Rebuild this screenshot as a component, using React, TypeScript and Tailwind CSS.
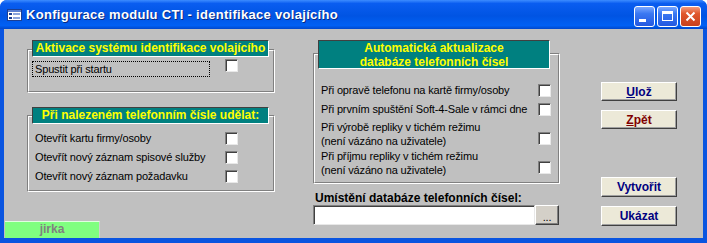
import React from "react"

const font = "font-['Liberation_Sans',Arial,sans-serif]"

function Check({ className = "" }: { className?: string }) {
  return (
    <span
      className={`block w-[13px] h-[13px] shrink-0 bg-white border border-t-[#808080] border-l-[#808080] border-r-[#e8e8e8] border-b-[#e8e8e8] shadow-[inset_1px_1px_0_#404040] ${className}`}
    />
  )
}

function Header({ children, className = "" }: { children: React.ReactNode; className?: string }) {
  return (
    <div
      className={`bg-[#008080] text-[#ffff00] font-bold text-[12px] text-center border border-t-[#404040] border-l-[#404040] border-r-white border-b-white ${className}`}
    >
      {children}
    </div>
  )
}

// etched group box (outer dark/white, inner white/dark)
function Frame({ children, className = "" }: { children: React.ReactNode; className?: string }) {
  return (
    <div className={`border border-t-[#808080] border-l-[#808080] border-r-white border-b-white ${className}`}>
      <div className="h-full border border-t-white border-l-white border-r-[#808080] border-b-[#808080]">
        {children}
      </div>
    </div>
  )
}

function Btn({ children, color = "text-[#000080]", className = "" }: { children: React.ReactNode; color?: string; className?: string }) {
  return (
    <button
      className={`w-[76px] h-[19px] bg-[#ece9d8] border border-t-white border-l-white border-r-[#404040] border-b-[#404040] shadow-[inset_-1px_-1px_0_#a0a0a0] font-bold text-[12px] leading-none ${color} ${className}`}
    >
      {children}
    </button>
  )
}

function TitleIcon() {
  return (
    <svg width="15" height="12" viewBox="0 0 15 12" className="shrink-0">
      <rect x="0.5" y="0.5" width="14" height="11" fill="#ffffff" stroke="#1b3f94" />
      <rect x="1" y="1" width="13" height="2" fill="#5a7fd0" />
      <rect x="2" y="4" width="3" height="2" fill="#1b3f94" />
      <rect x="6" y="4" width="7" height="2" fill="#8aa4dc" />
      <rect x="2" y="8" width="3" height="2" fill="#1b3f94" />
      <rect x="6" y="8" width="7" height="2" fill="#8aa4dc" />
    </svg>
  )
}

function WinBtn({ kind }: { kind: "min" | "max" | "close" }) {
  const bg =
    kind === "close"
      ? "bg-[linear-gradient(180deg,#f29a7c_0%,#e0572c_35%,#c8401c_100%)]"
      : "bg-[linear-gradient(180deg,#7aa8ff_0%,#3a78f2_35%,#2458e0_100%)]"
  return (
    <div className={`w-[21px] h-[21px] rounded-[3px] border border-white flex items-center justify-center ${bg}`}>
      {kind === "min" && <span className="block w-[7px] h-[3px] bg-white mt-[8px] -ml-[4px]" />}
      {kind === "max" && <span className="block w-[11px] h-[10px] border border-white border-t-[3px]" />}
      {kind === "close" && (
        <svg width="11" height="11" viewBox="0 0 11 11">
          <path d="M1.5 1.5 L9.5 9.5 M9.5 1.5 L1.5 9.5" stroke="#ffffff" strokeWidth="2" />
        </svg>
      )}
    </div>
  )
}

export default function App() {
  const leftRows = ["Otevřít kartu firmy/osoby", "Otevřít nový záznam spisové služby", "Otevřít nový záznam požadavku"]

  return (
    <div className={`w-[707px] h-[243px] flex flex-col bg-[#0a55e0] rounded-t-[7px] overflow-hidden text-black ${font}`}>
      {/* Title bar */}
      <div className="h-[29px] shrink-0 flex items-center pl-[7px] bg-[linear-gradient(180deg,#3d8cff_0%,#0a5df0_12%,#0054e3_55%,#0060f4_88%,#0047cc_100%)]">
        <TitleIcon />
        <span className="ml-[4px] text-white font-bold text-[13px] tracking-[0.3px] [text-shadow:1px_1px_0_#0a2a80]">
          Konfigurace modulu CTI - identifikace volajícího
        </span>
        <div className="ml-auto mr-[6px] mt-[3px] flex gap-[2px]">
          <WinBtn kind="min" />
          <WinBtn kind="max" />
          <WinBtn kind="close" />
        </div>
      </div>

      {/* Client */}
      <div className="flex-1 mx-[4px] mb-[5px] bg-[#c0c0c0] flex text-[11px] tracking-[-0.15px]">
        {/* Left column */}
        <div className="w-[271px] flex flex-col pt-[11px]">
          <div className="pl-[23px]">
            <Frame className="mt-[9px] w-[248px] h-[44px]">
              <Header className="-mt-[11px] ml-[3px] w-[237px] h-[17px] leading-[15px] tracking-normal">
                Aktivace systému identifikace volajícího
              </Header>
              <div className="mt-[4px] flex items-start">
                <div className="ml-[3px] w-[178px] h-[16px] border border-dotted border-black pl-[2px] leading-[14px]">
                  Spustit při startu
                </div>
                <Check className="ml-[15px] -mt-[2px]" />
              </div>
            </Frame>

            <Frame className="mt-[22px] w-[248px] h-[77px]">
              <Header className="-mt-[10px] ml-[3px] w-[237px] h-[17px] leading-[15px] tracking-normal">
                Při nalezeném telefonním čísle udělat:
              </Header>
              <div className="mt-[5px] flex flex-col">
                {leftRows.map((r) => (
                  <div key={r} className="h-[19px] flex items-center">
                    <span className="w-[196px] pl-[6px]">{r}</span>
                    <Check />
                  </div>
                ))}
              </div>
            </Frame>
          </div>

          <div className="mt-auto ml-[1px] w-[95px] h-[17px] bg-[#80ff80] border-t border-t-[#e0ffe0] border-r border-r-[#d0d0d0] text-center font-bold text-[#808080] text-[12px] leading-[15px] tracking-normal">
            jirka
          </div>
        </div>

        {/* Middle column */}
        <div className="ml-[38px] w-[247px] flex flex-col pt-[11px]">
          <Frame className="mt-[13px] w-[247px] h-[131px]">
            <Header className="-mt-[15px] ml-[3px] w-[232px] h-[29px] leading-[14px] tracking-normal">
              Automatická aktualizace
              <br />
              databáze telefonních čísel
            </Header>
            <div className="mt-[12px] flex flex-col">
              <div className="h-[19px] flex items-center">
                <span className="w-[223px] pl-[6px]">Při opravě telefonu na kartě firmy/osoby</span>
                <Check />
              </div>
              <div className="h-[19px] flex items-center">
                <span className="w-[223px] pl-[6px]">Při prvním spuštění Soft-4-Sale v rámci dne</span>
                <Check />
              </div>
              <div className="mt-[1px] h-[28px] flex items-start">
                <span className="w-[223px] pl-[6px] leading-[14px]">
                  Při výrobě repliky v tichém režimu
                  <br />
                  (není vázáno na uživatele)
                </span>
                <Check className="mt-[12px]" />
              </div>
              <div className="mt-[1px] h-[28px] flex items-start">
                <span className="w-[223px] pl-[6px] leading-[14px]">
                  Při příjmu repliky v tichém režimu
                  <br />
                  (není vázáno na uživatele)
                </span>
                <Check className="mt-[12px]" />
              </div>
            </div>
          </Frame>

          <div className="mt-[8px] ml-[2px] font-bold text-[12px] leading-[13px] tracking-normal">
            Umístění databáze telefonních čísel:
          </div>
          <div className="flex">
            <div className="w-[222px] h-[20px] bg-white border border-t-[#808080] border-l-[#808080] border-r-[#e8e8e8] border-b-[#e8e8e8] shadow-[inset_1px_1px_0_#404040]" />
            <button className="w-[24px] h-[20px] bg-[#d4d0c8] border border-t-white border-l-white border-r-[#404040] border-b-[#404040] shadow-[inset_-1px_-1px_0_#808080] text-[11px] leading-none pt-[4px]">
              ...
            </button>
          </div>
        </div>

        {/* Right buttons */}
        <div className="ml-[41px] flex flex-col pt-[11px] tracking-normal">
          <Btn className="mt-[42px]">
            <span className="underline">U</span>lož
          </Btn>
          <Btn className="mt-[9px]" color="text-[#800000]">
            <span className="underline">Z</span>pět
          </Btn>
          <Btn className="mt-[48px] h-[20px]">Vytvořit</Btn>
          <Btn className="mt-[9px] h-[20px]">Ukázat</Btn>
        </div>
      </div>
    </div>
  )
}
